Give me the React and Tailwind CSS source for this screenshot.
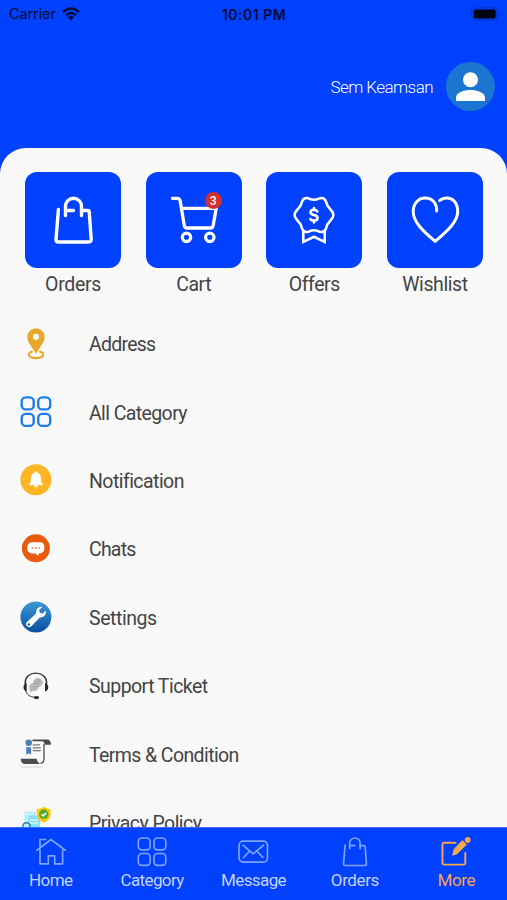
import React from "react";

function BagPaths() {
  return (
    <>
      <path d="M33.4 37.5 31 67.5Q31 70 33.4 70H63.6Q66.4 70 66.2 67.5L64.3 40.3Q64.2 38.5 62.4 38.5H57" />
      <path d="M40.5 43.5V34.3a8 8 0 0 1 16 0V43.5M41 38.5H48.5" />
    </>
  );
}

function TileIcon({ width = 3.2, children }) {
  return (
    <svg viewBox="0 0 96 96" className="size-24" fill="none" stroke="white" strokeWidth={width} strokeLinecap="round" strokeLinejoin="round">
      {children}
    </svg>
  );
}

const tiles = [
  {
    label: "Orders",
    fit: "tracking-[-0.35px]",
    icon: (
      <TileIcon width={3.4}>
        <BagPaths />
      </TileIcon>
    ),
  },
  {
    label: "Cart",
    fit: "tracking-[-0.5px]",
    badge: "3",
    icon: (
      <TileIcon width={3.3}>
        <path d="M26.5 26.3H31Q33.6 26.3 34.2 29L38.3 53.5Q38.7 56 41 56H64.5Q66.8 56 67.2 53.5L70.2 36.3H35.7" />
        <circle cx="40.5" cy="65.3" r="4.2" />
        <circle cx="63.8" cy="65.3" r="4.2" />
      </TileIcon>
    ),
  },
  {
    label: "Offers",
    fit: "tracking-[-0.45px]",
    icon: (
      <TileIcon width={2.6}>
        <path d="M43.5 26.700Q48 28.700 52.500 26.700C56.500 24.800 59.500 26.800 60.300 30.500C60.800 34 62.500 35.500 64.500 37.500C68.500 41.500 68.500 44.500 64.500 48.500C62.500 50.500 60.800 52 60.300 55.500C59.500 59.200 56.500 61.200 52.500 59.300Q48 57.300 43.500 59.300C39.500 61.200 36.500 59.200 35.700 55.500C35.200 52 33.500 50.500 31.500 48.500C27.500 44.500 27.500 41.500 31.500 37.500C33.500 35.500 35.200 34 35.700 30.500C36.500 26.800 39.500 24.800 43.500 26.700Z" />
        <path d="M37.300 59V70L48 64.800 58.700 70V59" strokeLinejoin="miter" />
        <path d="M51.300 39.500Q50.500 37.800 48 37.800 44.500 38 44.500 40.300 44.500 42.400 48 43 51.600 43.600 51.600 46.200 51.500 48.500 48 48.600 45 48.600 44.400 47M48 36V37.500M48 49V50.500" />
      </TileIcon>
    ),
  },
  {
    label: "Wishlist",
    fit: "tracking-[-0.4px]",
    icon: (
      <TileIcon width={3}>
        <path d="M49.700 39C50 31 45 26 38.300 26C31 26 26.200 32 26.200 39.500C26.200 50 36 59 48.200 69.400C60 59 70.700 50 70.700 39.500C70.700 31 66 26 60 26Q55.500 26 52.600 28.600" />
      </TileIcon>
    ),
  },
];

function ListSvg({ children }) {
  return (
    <svg viewBox="0 0 32 32" className="size-8 shrink-0" fill="none">
      {children}
    </svg>
  );
}

const rows = [
  {
    label: "Address",
    fit: "tracking-[-0.75px]",
    icon: (
      <ListSvg>
        <path d="M11.200 23.600C5 24.800 6 30.200 16 30.200S27 24.800 20.800 23.600" transform="translate(2.400 0) scale(.85 1)" stroke="#e8a82b" strokeWidth="2.200" strokeLinecap="round" />
        <path fillRule="evenodd" d="M16 .3a8.700 8.700 0 0 0-8.700 8.700C7.300 14.500 13 20 16 26c3-6 8.700-11.500 8.700-17A8.700 8.700 0 0 0 16 .3Zm0 5.400a3.100 3.100 0 1 1 0 6.200 3.100 3.100 0 0 1 0-6.200Z" fill="#e8a82b" />
      </ListSvg>
    ),
  },
  {
    label: "All Category",
    fit: "tracking-[-0.6px]",
    icon: (
      <ListSvg>
        <g stroke="#1f7fe5" strokeWidth="2.400">
          <rect x="1.700" y="1.400" width="12" height="12" rx="4" />
          <rect x="18.200" y="1.400" width="12" height="12" rx="4" />
          <rect x="1.700" y="17.900" width="12" height="12" rx="4" />
          <rect x="18.200" y="17.900" width="12" height="12" rx="4" />
        </g>
      </ListSvg>
    ),
  },
  {
    label: "Notification",
    fit: "tracking-[-0.55px]",
    icon: (
      <ListSvg>
        <circle cx="15.900" cy="15.700" r="15.500" fill="#ffb424" />
        <path d="M16 7.600a1.200 1.200 0 0 0-1.200 1.300C12 9.500 11.200 12 11.200 14.500 11.200 18 10.500 18.800 9 20.800h14c-1.500-2-2.200-2.800-2.200-6.300 0-2.500-.8-5-3.600-5.600A1.200 1.200 0 0 0 16 7.600ZM14.300 21.200a1.700 1.900 0 0 0 3.400 0Z" fill="white" stroke="white" strokeWidth=".5" />
      </ListSvg>
    ),
  },
  {
    label: "Chats",
    fit: "tracking-[-0.8px]",
    icon: (
      <ListSvg>
        <circle cx="15.900" cy="15.300" r="14" fill="#e95a0c" />
        <path d="M11.700 9.300h8.300a4.500 4.500 0 0 1 4.300 4.500v2.100a4.500 4.500 0 0 1-4.500 4.500h-1.200V23l-3.200-2.600h-3.700a4.500 4.500 0 0 1-4.400-4.500v-2.100a4.500 4.500 0 0 1 4.400-4.500Z" fill="white" />
        <g fill="#f0915c">
          <circle cx="12.500" cy="15" r="1.050" />
          <circle cx="15.900" cy="15" r="1.050" />
          <circle cx="19.300" cy="15" r="1.050" />
        </g>
      </ListSvg>
    ),
  },
  {
    label: "Settings",
    fit: "tracking-[-0.45px]",
    icon: (
      <ListSvg>
        <defs>
          <linearGradient id="wrenchDisc" x1="0" y1="0" x2="0" y2="1">
            <stop offset="0" stopColor="#3c9ad6" />
            <stop offset="1" stopColor="#0a4f9c" />
          </linearGradient>
        </defs>
        <circle cx="15.900" cy="16" r="15.500" fill="url(#wrenchDisc)" />
        <path d="M22.500 5.700C19 5.200 16 7.700 16.200 11.200L15.500 13 7 20.900a2.900 2.900 0 1 0 4.400 4.300L19.500 16.700l2-.5C24.700 15.700 26.600 12.800 25.700 9.500L22.700 12.400 19.600 11.800 19.300 8.700Z" fill="white" />
        <circle cx="8.800" cy="23.500" r="1.250" fill="#1766ae" />
      </ListSvg>
    ),
  },
  {
    label: "Support Ticket",
    fit: "tracking-[-0.55px]",
    icon: (
      <ListSvg>
        <path d="M5.200 14V12.800C5.200 6.900 9.800 3.100 15.800 3.100S26.600 6.900 26.600 12.800V14" stroke="#343434" strokeWidth="1.400" />
        <path d="M5.300 19.500C6.500 24.500 9.500 26.900 15 27.300" stroke="#3b3b3b" strokeWidth="1" />
        <path d="M6.700 13v8.500C4.800 21.200 3.500 19.500 3.500 17.300s1.200-4 3.200-4.300ZM25 13v8.500c2-.3 3.300-2 3.300-4.200S27 13.300 25 13Z" fill="#292929" />
        <ellipse cx="16.500" cy="27.400" rx="2.600" ry="1.500" fill="#222" />
        <g fill="#bdbdbd" stroke="#a3a3a3" strokeWidth=".7">
          <ellipse cx="18" cy="12.500" rx="4.300" ry="4" />
          <path d="M9.800 18.500c-.7-3 1.300-5.200 4-5.200 2.500 0 4.400 1.800 4.400 3.800 0 2.400-2.200 3.800-4.800 3.500l-2.900 1Z" />
        </g>
        <path d="M15.300 11.300h5M15.300 13.300h5M11.500 16.300h4.800M11.500 18.200h4.800" stroke="#a0a0a0" strokeWidth=".8" />
      </ListSvg>
    ),
  },
  {
    label: "Terms & Condition",
    fit: "tracking-[-0.6px]",
    icon: (
      <ListSvg>
        <ellipse cx="12" cy="29" rx="11.500" ry="1.500" fill="#e6e6e6" />
        <path d="M12.500 1.600H27c2.600 0 4 2 4 5.200h-6.500C24.500 4.600 23.700 3.200 22 3.200h-9.500Z" fill="#4b4b4b" />
        <path d="M24 6V20.500c0 3.500-1 4.800-3.500 4.800" stroke="#595959" strokeWidth="1.400" />
        <path d="M.7 20.800h16.100c.2 2 .9 3.700 3.500 5.200H5C2.500 26 .7 24 .7 20.800Z" fill="#4b4b4b" />
        <path d="M12.800 6.900H20M12.800 9.800H20.800M12.800 12.700H20.800" stroke="#777" strokeWidth="1.200" />
        <circle cx="8.700" cy="4.700" r="3.300" fill="#4b7eb8" />
        <path d="M6.200 9.300h4.900v7.500l-2.400-1.500-2.500 1.500Z" fill="#4b7eb8" />
      </ListSvg>
    ),
  },
  {
    label: "Privacy Policy",
    fit: "tracking-[-0.55px]",
    icon: (
      <ListSvg>
        <path d="M4.500 5.500H16V29H4.500Z" fill="#b4eefb" />
        <path d="M8.500 9.500H20V29H8.500Z" fill="#8ae0f8" />
        <path d="M10 14h8M10 17h8M6 8h7" stroke="#d2f6ff" strokeWidth="1.300" />
        <circle cx="6.500" cy="20.300" r="3.600" stroke="#267cbd" strokeWidth="1.600" />
        <path d="M23.700.8c2.300 1.700 4.300 2.300 6.900 2.300v5.300c0 3.800-2.700 6.400-6.900 8-4.200-1.600-6.900-4.200-6.900-8V3.100c2.600 0 4.600-.6 6.900-2.300Z" fill="#ffc50b" />
        <circle cx="23.700" cy="8.300" r="4.700" fill="#4ea92d" />
        <path d="m21.500 8.200 1.700 1.700 3-3" stroke="white" strokeWidth="1.500" />
      </ListSvg>
    ),
  },
];

function NavSvg({ children }) {
  return (
    <svg viewBox="0 0 32 32" className="size-8" fill="none" stroke="currentColor" strokeWidth="1.700" strokeLinecap="round" strokeLinejoin="round">
      {children}
    </svg>
  );
}

const nav = [
  {
    label: "Home",
    fit: "tracking-[-0.6px]",
    icon: (
      <NavSvg>
        <path d="M1.900 14.200 16 3.500 30.300 14.200M5 11.500V3.500H10.500M5 14V27.800H13.300V19.800H19.700V27.800H27.600V14" />
      </NavSvg>
    ),
  },
  {
    label: "Category",
    fit: "tracking-[-0.6px]",
    icon: (
      <NavSvg>
        <rect x="2.300" y="2" width="11.800" height="11.800" rx="3.500" />
        <rect x="18" y="2" width="11.800" height="11.800" rx="3.500" />
        <rect x="2.300" y="17.500" width="11.800" height="11.800" rx="3.500" />
        <rect x="18" y="17.500" width="11.800" height="11.800" rx="3.500" />
      </NavSvg>
    ),
  },
  {
    label: "Message",
    fit: "tracking-[-0.6px]",
    icon: (
      <NavSvg>
        <rect x="2" y="5.200" width="28.500" height="21" rx="4.200" />
        <path d="m6 9.200 10.200 8.600L26.500 9.200M6.500 21.500 12.700 15M26 21.500 19.800 15" />
      </NavSvg>
    ),
  },
  {
    label: "Orders",
    fit: "tracking-[-0.4px]",
    icon: (
      <NavSvg>
        <g transform="translate(-15.600 -14.600) scale(.65 .63)" strokeWidth="2.600">
          <BagPaths />
        </g>
      </NavSvg>
    ),
  },
  {
    label: "More",
    fit: "tracking-[-0.4px]",
    active: true,
    icon: (
      <NavSvg>
        <path d="M15.500 6.700H4.300Q2.500 6.700 2.500 8.500V26.800Q2.500 28.600 4.300 28.600H23.500Q25.300 28.600 25.300 26.800V17" strokeWidth="1.900" />
        <path d="M22.500 4.800 26.400 8.600 17 17.700 12.700 19.200 14.100 13.500Z" fill="currentColor" strokeWidth="1" />
        <circle cx="27.700" cy="4" r="2.900" fill="currentColor" stroke="none" />
      </NavSvg>
    ),
  },
];

export default function App() {
  return (
    <div className="flex h-[900px] w-[507px] flex-col overflow-hidden bg-[#0040ff] font-['Roboto',sans-serif]">
      <div className="grid h-7 shrink-0 grid-cols-3 items-center pr-[6px] pl-[9px] font-['Inter',sans-serif] text-[#000b38]">
        <div className="flex items-center gap-[6px] text-[14.500px]">
          <span className="tracking-[-0.1px]">Carrier</span>
          <svg viewBox="0 0 18 14" className="h-[14px] w-[18px]" fill="none" stroke="currentColor" strokeWidth="2.400">
            <path d="M1 5.200Q9-2.200 17 5.200M4 8.300Q9 3.700 14 8.300" />
            <path d="M5.900 10.200Q9 7.600 12.100 10.200L9 13.500Z" fill="currentColor" stroke="none" />
          </svg>
        </div>
        <div className="-translate-x-px text-center text-[14px] font-semibold tracking-[0.500px] whitespace-nowrap">10:01 PM</div>
        <svg viewBox="0 0 30 14" className="h-[14px] w-[30px] justify-self-end">
          <rect x=".7" y=".9" width="25.500" height="12" rx="3.500" fill="none" stroke="#0630bd" strokeWidth="1" />
          <rect x="2.600" y="2.600" width="22" height="8.800" rx="2" fill="#000514" />
          <path d="M27.700 4.700Q29.800 7 27.700 9.300Z" fill="#0630bd" />
        </svg>
      </div>

      <div className="flex h-[120px] shrink-0 items-center justify-end gap-[13px] pr-3 pb-[3px] text-white">
        <span className="pt-[3px] text-[17px] font-[350] tracking-[-0.55px]">Sem Keamsan</span>
        <svg viewBox="0 0 49 49" className="size-[49px]">
          <circle cx="24.500" cy="24.500" r="24.500" fill="#1b76d1" />
          <circle cx="24.500" cy="17.800" r="7.500" fill="white" />
          <path d="M10 39V35.500C10 30.500 18 28 24.500 28S39 30.500 39 35.500V39Z" fill="white" />
        </svg>
      </div>

      <main className="flex min-h-0 flex-1 flex-col overflow-hidden rounded-t-[26px] bg-[#f9f9f9] font-[380] text-[#444]">
        <div className="flex shrink-0 justify-between pt-6 pr-6 pl-[25px]">
          {tiles.map((t) => (
            <div key={t.label} className="flex w-24 flex-col items-center">
              <div className="relative size-24 rounded-[12px] bg-[#0040ff]">
                {t.icon}
                {t.badge && (
                  <span className="absolute top-[20px] left-[59px] flex size-[17px] items-center justify-center rounded-full bg-[#d32f2f] text-[12px] font-medium text-white">
                    {t.badge}
                  </span>
                )}
              </div>
              <span className={`h-8 text-[19.500px] leading-[33px] whitespace-nowrap ${t.fit}`}>{t.label}</span>
            </div>
          ))}
        </div>
        <div className="min-h-0 flex-1 overflow-hidden pt-[9.500px]">
          {rows.map((r) => (
            <div key={r.label} className="flex h-[68.400px] items-center gap-[37px] pl-5">
              {r.icon}
              <span className={`pt-[3px] text-[19.500px] leading-7 whitespace-nowrap ${r.fit}`}>{r.label}</span>
            </div>
          ))}
        </div>
      </main>

      <nav className="grid h-[73px] shrink-0 grid-cols-5 border-t border-[#3a68ee] bg-[#0040ff]">
        {nav.map((n) => (
          <div key={n.label} className={`flex flex-col items-center pt-2 ${n.active ? "text-[#f6a64f]" : "text-[#7ea3ff]"}`}>
            {n.icon}
            <span className={`text-[17px] leading-6 ${n.fit} ${n.active ? "" : "text-[#c3d3ff]"}`}>{n.label}</span>
          </div>
        ))}
      </nav>
    </div>
  );
}
